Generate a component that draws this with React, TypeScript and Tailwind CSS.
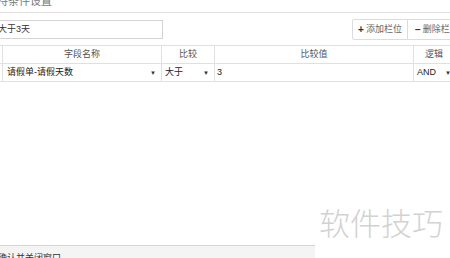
import React from "react";

const font = { fontFamily: '"Liberation Sans", "Noto Sans CJK SC", sans-serif' };

function Caret() {
  return <span className="text-[6px] leading-none text-[#333]">▼</span>;
}

export default function App() {
  return (
    <div
      className="relative w-[450px] h-[258px] overflow-hidden bg-white flex flex-col"
      style={font}
    >
      {/* title */}
      <div className="h-[13px] shrink-0 border-b border-[#e2e2e2] overflow-hidden">
        <div className="ml-[-3px] mt-[-5px] text-[11px] leading-[13px] text-[#777] whitespace-nowrap">
          持条件设置
        </div>
      </div>

      {/* input + buttons */}
      <div className="mt-[6px] flex items-start shrink-0">
        <div className="ml-[-10px] shrink-0 w-[173px] h-[19px] mt-[1px] border border-[#d4d4d4] bg-white pl-[7px] flex items-center text-[9px] text-[#333] whitespace-nowrap">
          大于3天
        </div>
        <div className="ml-[189px] flex shrink-0 h-[21px] border border-[#dcdcdc] rounded-[2px] bg-white text-[9px] text-[#666] whitespace-nowrap">
          <div className="w-[55px] shrink-0 flex items-center justify-center gap-[2px] border-r border-[#dcdcdc]">
            <span className="font-bold text-[#333] text-[10px] leading-none">+</span>
            <span>添加栏位</span>
          </div>
          <div className="w-[60px] shrink-0 flex items-center pl-[7px] gap-[2px]">
            <span className="font-bold text-[#333] text-[10px] leading-none">−</span>
            <span>删除栏位</span>
          </div>
        </div>
      </div>

      {/* table */}
      <div className="mt-[5px] ml-[-20px] shrink-0 grid grid-cols-[23px_159px_53px_199px_60px] text-[9px] whitespace-nowrap">
        <div className="h-[19px] border-t border-b border-r border-[#e0e0e0]" />
        <div className="h-[19px] border-t border-b border-r border-[#e0e0e0] flex items-center justify-center text-[#555]">字段名称</div>
        <div className="h-[19px] border-t border-b border-r border-[#e0e0e0] flex items-center justify-center text-[#555]">比较</div>
        <div className="h-[19px] border-t border-b border-r border-[#e0e0e0] flex items-center justify-center text-[#555]">比较值</div>
        <div className="h-[19px] border-t border-b border-[#e0e0e0] flex items-center pl-[11px] text-[#555]">逻辑</div>

        <div className="h-[18px] border-b border-r border-[#e0e0e0]" />
        <div className="h-[18px] border-b border-r border-[#e0e0e0] flex items-center justify-between pl-[4px] pr-[5px] text-[#222]">
          <span>请假单-请假天数</span>
          <Caret />
        </div>
        <div className="h-[18px] border-b border-r border-[#e0e0e0] flex items-center justify-between pl-[3px] pr-[5px] text-[#222]">
          <span>大于</span>
          <Caret />
        </div>
        <div className="h-[18px] border-b border-r border-[#e0e0e0] flex items-center pl-[2px] text-[#222]">3</div>
        <div className="h-[18px] border-b border-[#e0e0e0] flex items-center pl-[3px] text-[#222]">
          <span>AND</span>
          <span className="ml-[9px]"><Caret /></span>
        </div>
      </div>

      {/* footer */}
      <div className="mt-auto w-[315px] h-[13px] shrink-0 overflow-hidden bg-[#f4f4f4] border-t border-[#d6d6d6]">
        <div className="ml-[-2px] mt-[7px] text-[9px] leading-[10px] text-[#333] whitespace-nowrap">确认并关闭窗口</div>
      </div>

      {/* watermark */}
      <div
        className="absolute left-[319px] top-[202px] text-[31px] leading-[40px] text-[#d2d2d2] whitespace-nowrap font-light"
        style={{ fontFamily: '"Noto Sans CJK SC", sans-serif' }}
      >
        软件技巧
      </div>
    </div>
  );
}
